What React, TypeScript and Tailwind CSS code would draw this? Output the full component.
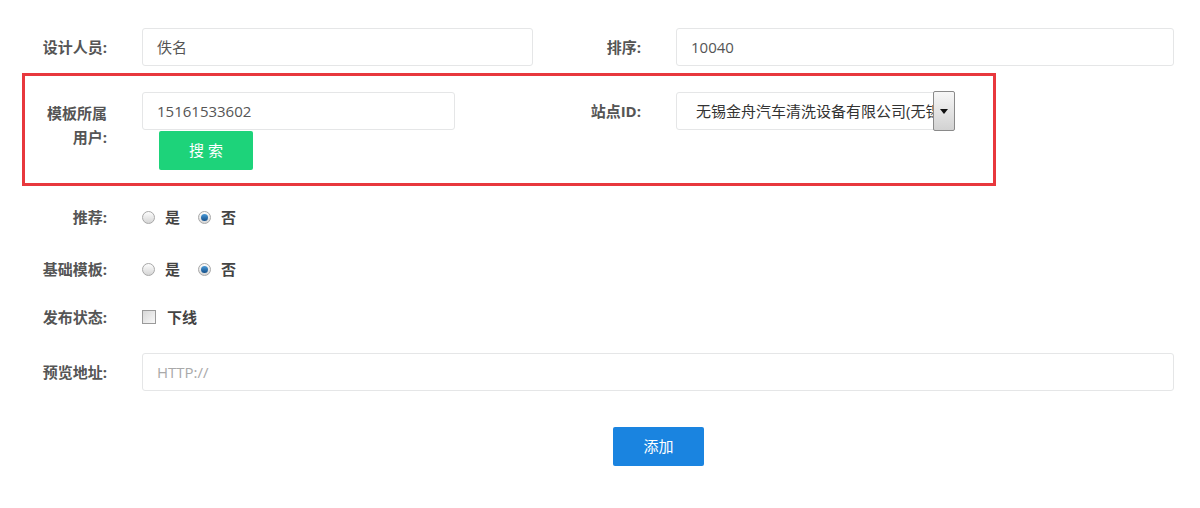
import React from 'react';

function Label({ children, className = '' }: { children: React.ReactNode; className?: string }) {
    return (
        <div className={`text-right text-[15px] font-bold leading-[24px] text-[#555] ${className}`}>
            {children}
        </div>
    );
}

function TextBox({ value, placeholder, className = '' }: { value?: string; placeholder?: string; className?: string }) {
    return (
        <div
            className={`flex h-[38px] items-center rounded-[3px] border border-[#e5e6e7] px-[14px] text-[15px] ${value ? 'text-[#555]' : 'text-[#a9a9a9]'} ${className}`}
        >
            {value || placeholder}
        </div>
    );
}

function Radio({ checked }: { checked?: boolean }) {
    return (
        <span className="flex h-[13px] w-[13px] items-center justify-center rounded-full border border-[#a8a8a8] bg-gradient-to-b from-[#fdfdfd] to-[#d6d6d6]">
            {checked && (
                <span className="h-[7px] w-[7px] rounded-full bg-gradient-to-b from-[#4a9ad8] to-[#14508a]" />
            )}
        </span>
    );
}

function RadioGroup({ yes }: { yes: boolean }) {
    return (
        <div className="ml-[35px] flex items-center text-[15px] font-bold text-[#444]">
            <Radio checked={yes} />
            <span className="ml-[10px]">是</span>
            <span className="ml-[18px]">
                <Radio checked={!yes} />
            </span>
            <span className="ml-[10px]">否</span>
        </div>
    );
}

export default function App() {
    return (
        <div className="min-h-[508px] bg-white pt-[28px] font-['Open_Sans','Noto_Sans_CJK_SC',sans-serif]">
            {/* 设计人员 / 排序 */}
            <div className="flex h-[38px] items-center">
                <Label className="w-[107px]">设计人员:</Label>
                <TextBox value="佚名" className="ml-[35px] w-[391px]" />
                <Label className="w-[108px]">排序:</Label>
                <TextBox value="10040" className="ml-[35px] w-[498px]" />
            </div>

            {/* highlighted block */}
            <div className="ml-[22px] mt-[7px] h-[113px] w-[974px] border-[3px] border-[#e8383d] pt-[16px]">
                <div className="flex items-start">
                    <Label className="mt-[9px] w-[82px]">
                        模板所属
                        <br />
                        用户:
                    </Label>
                    <div className="ml-[35px]">
                        <TextBox value="15161533602" className="w-[313px]" />
                        <button className="ml-[17px] mt-[1px] h-[39px] w-[94px] rounded-[2px] bg-[#1dd37a] text-[15px] text-white">
                            搜 索
                        </button>
                    </div>
                    <div className="flex h-[38px] items-center">
                        <Label className="w-[186px]">站点ID:</Label>
                        <div className="ml-[35px] flex h-[38px] w-[279px] items-center rounded-[3px] border border-[#e5e6e7] pl-[19px] text-[15px] text-[#333]">
                            <span className="flex-1 overflow-hidden whitespace-nowrap">无锡金舟汽车清洗设备有限公司(无锡</span>
                            <span className="-my-px -mr-px flex h-[40px] w-[22px] shrink-0 items-center justify-center rounded-[2px] border border-[#8a8a8a] bg-gradient-to-b from-[#f7f7f7] to-[#d2d2d2]">
                                <svg width="8" height="5" viewBox="0 0 8 5">
                                    <path d="M0 0h8L4 5z" fill="#111" />
                                </svg>
                            </span>
                        </div>
                    </div>
                </div>
            </div>

            {/* 推荐 */}
            <div className="mt-[19px] flex h-[24px] items-center">
                <Label className="w-[107px]">推荐:</Label>
                <RadioGroup yes={false} />
            </div>

            {/* 基础模板 */}
            <div className="mt-[28px] flex h-[24px] items-center">
                <Label className="w-[107px]">基础模板:</Label>
                <RadioGroup yes={false} />
            </div>

            {/* 发布状态 */}
            <div className="mt-[24px] flex h-[24px] items-center">
                <Label className="w-[107px]">发布状态:</Label>
                <div className="ml-[35px] flex items-center text-[15px] font-bold text-[#444]">
                    <span className="h-[14px] w-[14px] border border-[#9a9a9a] bg-gradient-to-br from-[#d8d8d8] to-[#f8f8f8]" />
                    <span className="ml-[11px]">下线</span>
                </div>
            </div>

            {/* 预览地址 */}
            <div className="mt-[24px] flex h-[38px] items-center">
                <Label className="w-[107px]">预览地址:</Label>
                <TextBox placeholder="HTTP://" className="ml-[35px] w-[1032px]" />
            </div>

            <div className="mt-[36px] flex">
                <button className="ml-[613px] h-[39px] w-[91px] rounded-[2px] bg-[#1a84e0] text-[15px] text-white">
                    添加
                </button>
            </div>
        </div>
    );
}
